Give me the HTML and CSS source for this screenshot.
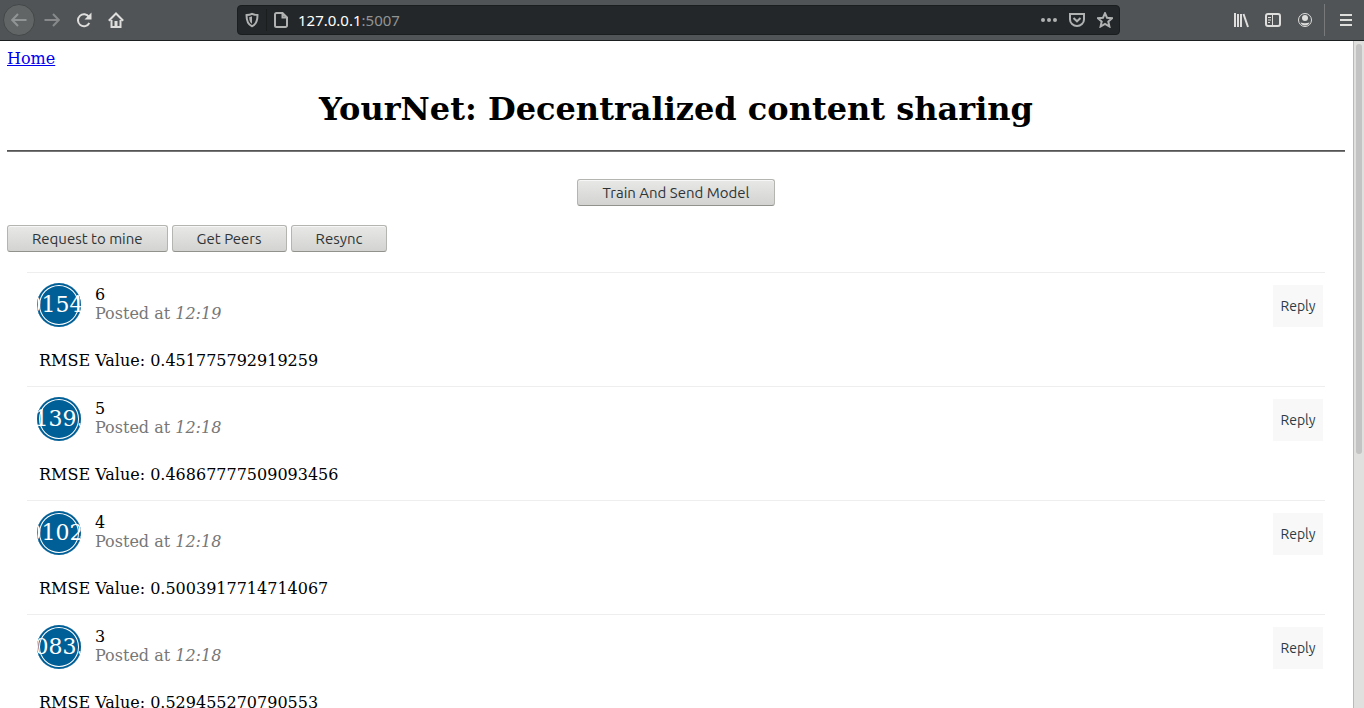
FILE: index.html
```html
<!DOCTYPE html>
<html lang="en">
<head>
<meta charset="utf-8">
<title>YourNet</title>
<link rel="stylesheet" href="styles.css">
</head>
<body>
<header class="toolbar">
  <nav class="nav-buttons" aria-label="Navigation">
    <button class="tool back" aria-label="Back"><svg viewBox="0 0 16 16"><path d="M15.500 8H1.500M7 2 1.200 8 7 14"/></svg></button>
    <button class="tool forward" aria-label="Forward"><svg viewBox="0 0 16 16"><path d="M.5 8h14M9 2l5.800 6L9 14"/></svg></button>
    <button class="tool" aria-label="Reload"><svg viewBox="0 0 16 16"><path d="M13 5A6 6 0 1 0 13.300 11"/><path class="solid" d="M15.500 .5v7H8.500z"/></svg></button>
    <button class="tool" aria-label="Home page"><svg viewBox="0 0 16 16"><path d="M.8 8.700 8 1.500l7.200 7.200M3.500 8v7h9V8"/><path class="solid" d="M6.500 9h3v6h-3z"/></svg></button>
  </nav>
  <div class="address-bar">
    <svg viewBox="0 0 16 16"><path d="M8 1.800c2 1 4 1.200 5.500 1.300 0 6-1 9.500-5.500 11.100C3.500 12.600 2.500 9 2.500 3.100 4 3 6 2.800 8 1.800z"/><path class="solid" d="M8 4.300v7.400C6 10.500 5.200 8.500 5.200 5.200 6.200 5.100 7.200 4.800 8 4.300z"/></svg>
    <span class="separator"></span>
    <svg viewBox="0 0 16 16"><path d="M3.500 1h6L14 5.500v8a1.500 1.500 0 0 1-1.500 1.500h-9A1.500 1.500 0 0 1 2 13.500v-11A1.500 1.500 0 0 1 3.500 1zM9.500 1v4.500H14"/></svg>
    <span class="url">127.0.0.1<span class="port">:5007</span></span>
    <button class="tool" aria-label="Page actions"><svg viewBox="0 0 16 16"><circle class="solid" cx="2" cy="8" r="2"/><circle class="solid" cx="8" cy="8" r="2"/><circle class="solid" cx="14" cy="8" r="2"/></svg></button>
    <button class="tool" aria-label="Save to Pocket"><svg viewBox="0 0 16 16"><path d="M1 2h14v5.500a7 6.500 0 0 1-14 0zM4.500 6 8 9.300 11.500 6"/></svg></button>
    <button class="tool" aria-label="Bookmark"><svg viewBox="0 0 16 16"><path d="m8 1.200 2 4.500 5 .5-3.700 3.300 1.100 5L8 12l-4.400 2.500 1.100-5L1 6.200l5-.5z"/></svg></button>
  </div>
  <div class="menu-buttons">
    <button class="tool" aria-label="Library"><svg viewBox="0 0 16 16"><path d="M2 1v14M5 2v13M8 2v13M10.500 2l4.500 13"/></svg></button>
    <button class="tool" aria-label="Sidebars"><svg viewBox="0 0 16 16"><rect x="1" y="2" width="14" height="12" rx="2"/><path class="thin" d="M7.500 2v12M3 5.500h3M3 8h3M3 10.500h2"/></svg></button>
    <button class="tool" aria-label="Account"><svg viewBox="0 0 16 16"><circle class="thin" cx="8" cy="8" r="6.500"/><circle class="solid" cx="8" cy="6" r="3"/><path class="solid" d="M3.500 10.500c3 1 6 1 9 0-1 4-8 4-9 0z"/></svg></button>
    <button class="tool app-menu" aria-label="Open menu"><svg viewBox="0 0 16 16"><path d="M2 3h12M2 8h12M2 13h12"/></svg></button>
  </div>
</header>
<div class="viewport">
  <main class="page">
    <a class="home-link" href="#">Home</a>
    <h1 class="title">YourNet: Decentralized content sharing</h1>
    <hr class="rule">
    <div class="train"><button class="action">Train And Send Model</button></div>
    <div class="actions">
      <button class="action">Request to mine</button>
      <button class="action">Get Peers</button>
      <button class="action">Resync</button>
    </div>
    <section class="posts">
      <article class="post">
        <div class="post-head"><div class="avatar"><span>0154.</span></div><div class="meta"><div>6</div><div class="time">Posted at <i>12:19</i></div></div><button class="reply">Reply</button></div>
        <p class="value">RMSE Value: 0.451775792919259</p>
      </article>
      <article class="post">
        <div class="post-head"><div class="avatar"><span>139.</span></div><div class="meta"><div>5</div><div class="time">Posted at <i>12:18</i></div></div><button class="reply">Reply</button></div>
        <p class="value">RMSE Value: 0.46867777509093456</p>
      </article>
      <article class="post">
        <div class="post-head"><div class="avatar"><span>0102.</span></div><div class="meta"><div>4</div><div class="time">Posted at <i>12:18</i></div></div><button class="reply">Reply</button></div>
        <p class="value">RMSE Value: 0.5003917714714067</p>
      </article>
      <article class="post">
        <div class="post-head"><div class="avatar"><span>083.</span></div><div class="meta"><div>3</div><div class="time">Posted at <i>12:18</i></div></div><button class="reply">Reply</button></div>
        <p class="value">RMSE Value: 0.529455270790553</p>
      </article>
    </section>
  </main>
  <div class="scrollbar"><div class="thumb"></div></div>
</div>
</body>
</html>
```
FILE: styles.css
```css
* { box-sizing: border-box; }
body {
  margin: 0;
  height: 100vh;
  display: flex;
  flex-direction: column;
  overflow: hidden;
  background: #fff;
  color: #000;
  font: 16px/19px "DejaVu Serif", serif;
}
button { font-family: Ubuntu, "Noto Sans", sans-serif; }
svg {
  display: block;
  width: 16px;
  height: 16px;
  flex: none;
  fill: none;
  stroke: currentColor;
  stroke-width: 2;
}
svg .solid { fill: currentColor; stroke: none; }
svg .thin { stroke-width: 1; }

.toolbar {
  flex: none;
  display: flex;
  align-items: center;
  height: 41px;
  padding: 0 5px 0 3px;
  background: #505456;
  border-bottom: 1px solid #1c1f20;
  color: #dededc;
}
.tool {
  display: grid;
  place-items: center;
  width: 32px;
  height: 32px;
  padding: 0;
  border: 0;
  background: none;
  color: inherit;
}
.nav-buttons { display: flex; width: 234px; }
.back {
  border: 1px solid #454849;
  border-radius: 50%;
  background: #626566;
  color: #919495;
}
.forward { width: 33px; color: #87898a; }
.address-bar {
  flex: 1;
  display: flex;
  align-items: center;
  height: 30px;
  padding: 0 0 0 6px;
  border: 1px solid #1b1e1f;
  border-radius: 4px;
  background: #232729;
  color: #b0b2b2;
}
.address-bar .tool { width: 28px; }
.separator { width: 1px; height: 22px; margin: 0 6px; background: #1b1e1f; }
.url {
  flex: 1;
  margin-left: 9px;
  color: #fff;
  font: 15px/20px "Noto Sans", sans-serif;
}
.port { color: #919495; }
.menu-buttons { display: flex; width: 239px; justify-content: flex-end; }
.app-menu {
  width: 35px;
  padding-left: 8px;
  border-left: 1px solid #77797a;
  margin-left: 3px;
}

.viewport { flex: 1; display: flex; min-height: 0; }
.page { flex: 1; min-width: 0; overflow: hidden; padding: 8px 8px 0 7px; }
.home-link { color: #0000ee; }
.title {
  margin: 21px 0;
  font-size: 32px;
  line-height: 40px;
  text-align: center;
}
.rule { margin: 0; border: 0; height: 2px; background: #555; border-bottom: 1px solid #777; }
.train { display: flex; justify-content: center; margin-top: 27px; }
.actions { display: flex; gap: 4px; margin-top: 19px; }
.action {
  height: 27px;
  padding: 0 24px;
  border: 1px solid #b4b4b0;
  border-bottom-color: #92928c;
  border-radius: 3px;
  background: linear-gradient(#e8e8e7, #d3d3d1);
  box-shadow: inset 0 1px #f7f7f7;
  color: #2e3436;
  font-size: 15px;
}
.posts { margin: 20px 20px 0; }
.post { height: 114px; padding: 10px 2px 0 10px; border-top: 1px solid #eee; }
.post-head { display: flex; align-items: flex-start; }
.avatar {
  display: flex;
  align-items: center;
  justify-content: center;
  width: 44px;
  height: 44px;
  padding-bottom: 2px;
  overflow: hidden;
  border-radius: 50%;
  background: #005f96;
  box-shadow: inset 0 0 0 2px #005f96, inset 0 0 0 3px #fff;
  color: #fff;
  font-size: 22px;
}
.meta { flex: 1; margin: 2px 0 0 14px; }
.time { color: #777; }
.reply {
  width: 50px;
  height: 42px;
  margin-top: 2px;
  padding: 0;
  border: 0;
  background: #f8f8f8;
  color: #2b3a45;
  font-size: 14px;
}
.value { margin: 24px 2px 0; }
.scrollbar { width: 11px; padding: 3px 2px; background: #e0e0de; border-left: 1px solid #b9b9b7; }
.thumb { height: 62%; border-radius: 4px; background: #c2c3c2; }
```
